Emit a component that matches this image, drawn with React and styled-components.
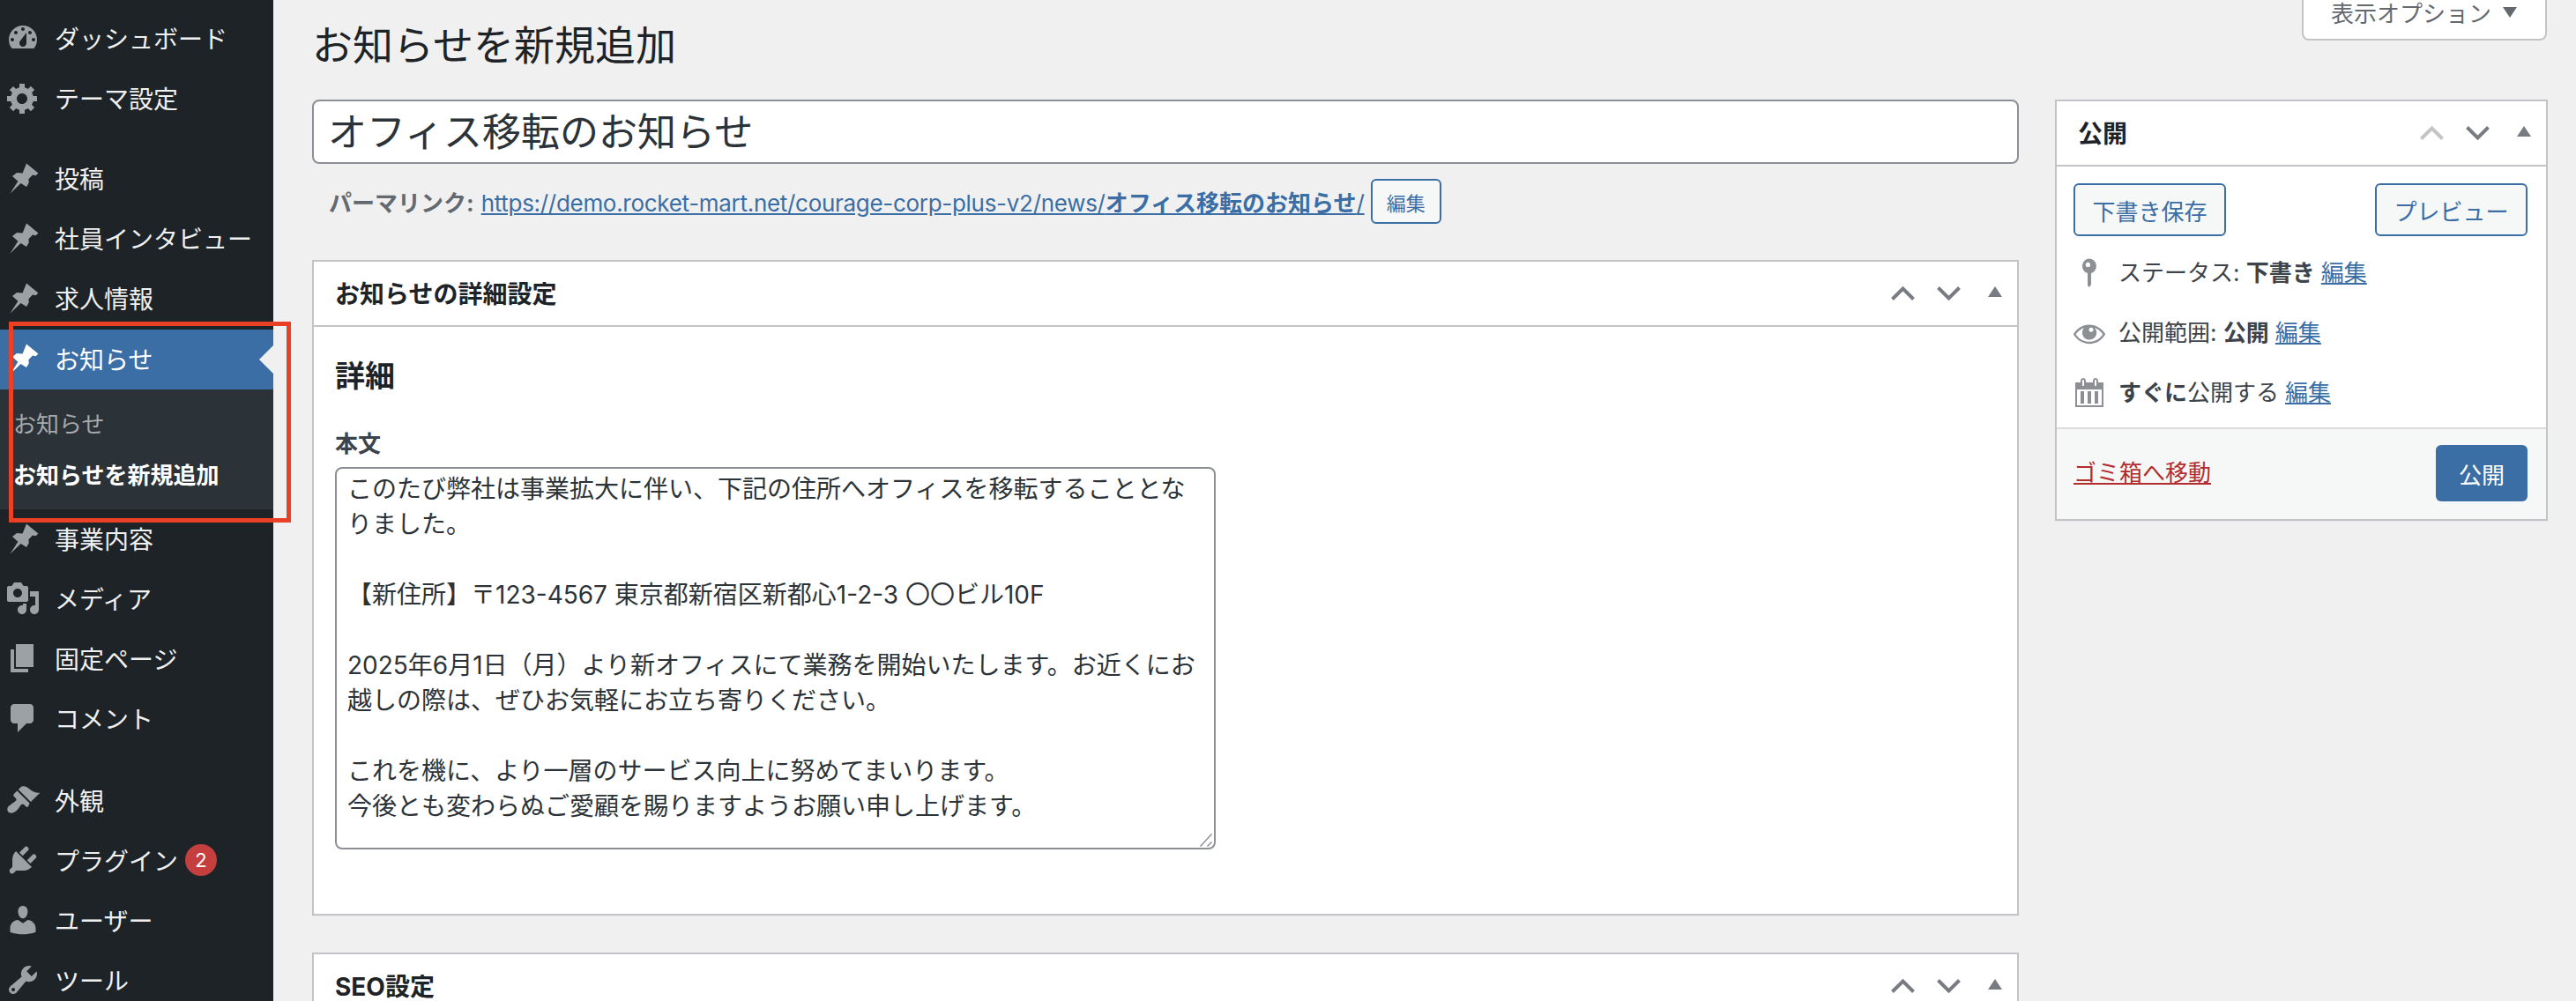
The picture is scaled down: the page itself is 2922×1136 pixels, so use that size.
// App.jsx
import React from 'react'
import styled, { createGlobalStyle } from 'styled-components'

const GlobalStyle = createGlobalStyle`
  html, body {
    margin: 0;
    height: 1136px;
    overflow: hidden;
    background: #f0f0f1;
  }
  body, input, textarea, button {
    font-family: Inter, "Noto Sans CJK JP", sans-serif;
  }
  * {
    box-sizing: border-box;
  }
`

const BLUE = '#3a6ea5'

const Shell = styled.div`
  position: relative;
  display: flex;
  width: 2922px;
  height: 1136px;
  overflow: hidden;
`

const Sidebar = styled.nav`
  flex: 0 0 310px;
  height: 100%;
  padding-top: 10px;
  background: #1d2327;
`

const MenuItem = styled.div`
  display: flex;
  align-items: center;
  height: 68px;
  padding: 0 0 2px 6px;
  margin-top: ${(p) => p.$gap || (p.$active ? 1 : 0)}px;
  background: ${(p) => (p.$active ? BLUE : 'transparent')};
  color: ${(p) => (p.$active ? '#fff' : '#f0f0f1')};
  font-size: 28px;
  position: relative;

  svg {
    flex: 0 0 40px;
    margin-right: 16px;
    fill: ${(p) => (p.$active ? '#fff' : '#9ca1a6')};
  }
`

const ActiveArrow = styled.span`
  position: absolute;
  right: 0;
  top: 18px;
  width: 0;
  height: 0;
  border: 16px solid transparent;
  border-left: none;
  border-right-color: #f0f0f1;
`

const Badge = styled.span`
  display: inline-flex;
  align-items: center;
  justify-content: center;
  width: 36px;
  height: 36px;
  margin-left: 8px;
  border-radius: 50%;
  background: #c53f3f;
  color: #fff;
  font-size: 22px;
`

const Submenu = styled.div`
  height: 136px;
  padding: 11px 0 0 15px;
  background: #2c3338;
`

const SubItem = styled.div`
  height: 58px;
  line-height: 58px;
  font-size: 26px;
  color: ${(p) => (p.$current ? '#fff' : '#a7aaad')};
  font-weight: ${(p) => (p.$current ? 700 : 400)};
`

const Highlight = styled.div`
  position: absolute;
  left: 10px;
  top: 365px;
  width: 320px;
  height: 228px;
  border: 5px solid #ea4025;
  pointer-events: none;
`

const Main = styled.main`
  flex: 1;
  min-width: 0;
  padding: 0 32px 0 44px;
`

const TopRow = styled.header`
  display: flex;
  justify-content: space-between;
  align-items: flex-start;
  height: 113px;
`

const PageTitle = styled.h1`
  margin: 18px 0 0;
  font-size: 46px;
  line-height: 66px;
  font-weight: 400;
  color: #1d2327;
`

const ScreenOptions = styled.div`
  display: flex;
  align-items: center;
  width: 278px;
  height: 50px;
  margin: -4px 1px 0 0;
  padding: 0 0 13px 31px;
  background: #fff;
  border: 2px solid #c3c4c7;
  border-top: none;
  border-radius: 0 0 8px 8px;
  color: #646970;
  font-size: 26px;

  svg {
    margin-left: 13px;
    fill: #646970;
  }
`

const Columns = styled.div`
  display: flex;
  align-items: flex-start;
  gap: 41px;
`

const Editor = styled.div`
  flex: 0 0 1936px;
`

const TitleInput = styled.input`
  display: block;
  width: 100%;
  height: 73px;
  padding: 0 16px 6px;
  border: 2px solid #8c8f94;
  border-radius: 8px;
  background: #fff;
  color: #2c3338;
  font-size: 44px;
  outline: none;
`

const PermalinkRow = styled.div`
  display: flex;
  align-items: center;
  height: 51px;
  margin: 17px 0 41px;
  padding-left: 19px;
  color: #646970;
  font-size: 26px;
`

const PermalinkLabel = styled.strong`
  margin-right: 8px;
  font-weight: 700;
`

const Link = styled.a`
  color: ${(p) => p.$color || BLUE};
  text-decoration: underline;
`

const PermalinkUrl = styled(Link)`
  letter-spacing: -0.3px;

  strong {
    letter-spacing: 0;
  }
`

const SmallButton = styled.button`
  width: 80px;
  height: 51px;
  margin-left: 7px;
  padding: 0;
  border: 2px solid ${BLUE};
  border-radius: 6px;
  background: #f6f7f7;
  color: ${BLUE};
  font-size: 22px;
`

const Postbox = styled.section`
  margin-bottom: 42px;
  background: #fff;
  border: 2px solid #c3c4c7;
  box-shadow: 0 1px 1px rgba(0, 0, 0, 0.04);
`

const PostboxHeader = styled.div`
  display: flex;
  align-items: center;
  justify-content: space-between;
  height: 74px;
  padding: 0 17px 2px 24px;
  border-bottom: 2px solid #c3c4c7;
`

const PostboxTitle = styled.h2`
  margin: 0;
  font-size: 28px;
  font-weight: 700;
  color: #1d2327;
`

const Handles = styled.div`
  display: flex;
  align-items: center;
  gap: 25px;
  margin-top: 2px;

  svg {
    display: block;
  }
`

const Triangle = styled.svg`
  margin: 0 0 4px 6px;
`

const DetailBody = styled.div`
  padding: 33px 0 73px 24px;
`

const DetailHeading = styled.h3`
  margin: 0 0 35px;
  font-size: 34px;
  line-height: 46px;
  font-weight: 700;
  color: #1d2327;
`

const FieldLabel = styled.label`
  display: block;
  margin-bottom: 7px;
  font-size: 26px;
  line-height: 38px;
  font-weight: 700;
  color: #3c434a;
`

const BodyWrap = styled.div`
  position: relative;
  width: 999px;
  height: 434px;
`

const BodyArea = styled.textarea`
  display: block;
  width: 100%;
  height: 100%;
  padding: 3px 12px 4px;
  border: 2px solid #8c8f94;
  border-radius: 8px;
  background: #fff;
  color: #2c3338;
  font-size: 28px;
  line-height: 40px;
  outline: none;
  resize: none;
`

const ResizeGrip = styled.svg`
  position: absolute;
  right: 4px;
  bottom: 3px;
`

const Aside = styled.aside`
  flex: 0 0 559px;
`

const PublishBody = styled.div`
  padding: 19px 21px 5px 19px;
`

const PublishActions = styled.div`
  display: flex;
  justify-content: space-between;
  margin-bottom: 8px;
`

const OutlineButton = styled.button`
  width: 173px;
  height: 60px;
  padding: 0;
  border: 2px solid ${BLUE};
  border-radius: 6px;
  background: #f6f7f7;
  color: ${BLUE};
  font-size: 26px;
`

const StatusRow = styled.div`
  display: flex;
  align-items: center;
  height: 68px;
  margin-left: -2px;
  color: #3c434a;
  font-size: 26px;

  svg {
    flex: 0 0 40px;
    margin-right: 13px;
    fill: #8c8f94;
  }

  strong {
    font-weight: 700;
  }
`

const StatusText = styled.span`
  margin-bottom: 5px;
`

const EditLink = styled(Link)`
  margin-left: 7px;
`

const PublishFooter = styled.div`
  display: flex;
  align-items: center;
  justify-content: space-between;
  height: 104px;
  padding: 0 21px 4px 19px;
  background: #f6f7f7;
  border-top: 2px solid #dcdcde;
  font-size: 26px;
`

const TrashLink = styled(Link)`
  margin-bottom: 3px;
`

const PublishButton = styled.button`
  width: 104px;
  height: 64px;
  margin-top: 2px;
  padding: 0;
  border: none;
  border-radius: 6px;
  background: ${BLUE};
  color: #fff;
  font-size: 26px;
`

const Icon = ({ d, evenodd }) => (
  <svg width='40' height='40' viewBox='0 0 20 20'>
    <path d={d} fillRule={evenodd ? 'evenodd' : undefined} />
  </svg>
)

const ICONS = {
  dashboard:
    'M3.76 16h12.48c1.1-1.37 1.76-3.11 1.76-5 0-4.42-3.58-8-8-8s-8 3.58-8 8c0 1.89.66 3.63 1.76 5zM10 4c.55 0 1 .45 1 1s-.45 1-1 1-1-.45-1-1 .45-1 1-1zM6 6c.55 0 1 .45 1 1s-.45 1-1 1-1-.45-1-1 .45-1 1-1zm8 0c.55 0 1 .45 1 1s-.45 1-1 1-1-.45-1-1 .45-1 1-1zm-5.37 5.55L12 7v6c0 1.1-.9 2-2 2s-2-.9-2-2c0-.57.24-1.08.63-1.45zM4 10c.55 0 1 .45 1 1s-.45 1-1 1-1-.45-1-1 .45-1 1-1zm12 0c.55 0 1 .45 1 1s-.45 1-1 1-1-.45-1-1 .45-1 1-1z',
  gear:
    'M18 12h-2.18c-.17.7-.44 1.35-.81 1.93l1.54 1.54-2.1 2.1-1.54-1.54c-.58.36-1.23.63-1.91.79V19H8v-2.18c-.68-.16-1.33-.43-1.91-.79l-1.54 1.54-2.12-2.12 1.54-1.54c-.36-.58-.63-1.23-.79-1.91H1V9.03h2.17c.16-.7.44-1.35.8-1.94L2.43 5.55l2.1-2.1 1.54 1.54c.58-.37 1.24-.64 1.93-.81V2h3v2.18c.68.16 1.33.43 1.91.79l1.54-1.54 2.12 2.12-1.54 1.54c.36.59.64 1.24.8 1.94H18V12zm-8.5 1.5c1.66 0 3-1.34 3-3s-1.34-3-3-3-3 1.34-3 3 1.34 3 3 3z',
  pin:
    'M12 1.7L18.7 7.2 17.3 8.6 15.5 8.3 13.2 10.6 13.4 12.6 12 15 8.8 13 2.7 18.9 7.2 11.9 4 9 6.5 7 9.8 7.2 11 4.3z',
  media:
    'M13 11V4c0-.55-.45-1-1-1h-1.67L9 1H5L3.67 3H2c-.55 0-1 .45-1 1v7c0 .55.45 1 1 1h10c.55 0 1-.45 1-1zM7 4.5c1.38 0 2.5 1.12 2.5 2.5S8.38 9.5 7 9.5 4.5 8.38 4.5 7 5.62 4.5 7 4.5zM14 6h5v10.5c0 1.38-1.12 2.5-2.5 2.5S14 17.88 14 16.5s1.12-2.5 2.5-2.5c.17 0 .34.02.5.05V9h-3V6zm-4 8.05V13h2v3.5c0 1.38-1.12 2.5-2.5 2.5S7 17.88 7 16.5 8.12 14 9.5 14c.17 0 .34.02.5.05z',
  pages: 'M6 15V2h10v13H6zm-1 1h8v2H3V5h2v11z',
  comment:
    'M5 2h9c1.1 0 2 .9 2 2v7c0 1.1-.9 2-2 2h-2l-5 5v-5H5c-1.1 0-2-.9-2-2V4c0-1.1.9-2 2-2z',
  brush:
    'M14.48 11.06L7.41 3.99l1.5-1.5c.5-.56 2.3-.47 3.51.32 1.21.8 1.43 1.28 2.91 2.1 1.18.64 2.45 1.26 4.45.85zm-.71.71L6.7 4.7 4.93 6.47c-.39.39-.39 1.02 0 1.41l1.06 1.06c.39.39.39 1.03 0 1.42-.6.6-1.43 1.11-2.21 1.69-.35.26-.7.53-1.01.84C1.43 13.23.5 15.5 1.76 16.76c1.26 1.26 3.53.33 4.87-1.01.3-.31.58-.66.84-1 .57-.79 1.08-1.62 1.69-2.22.39-.39 1.02-.39 1.41 0l1.06 1.06c.39.39 1.02.39 1.41 0z',
  plugin:
    'M13.11 4.36L9.87 7.6 8 5.73l3.24-3.24c.35-.34 1.05-.2 1.56.32.52.51.66 1.21.31 1.55zm-8 1.77l.91-1.12 9.01 9.01-1.19.84c-.71.71-2.63 1.16-3.82 1.16H6.14L4.9 17.26c-.59.59-1.54.59-2.12 0-.59-.58-.59-1.53 0-2.12l1.24-1.24v-3.88c0-1.13.4-3.19 1.09-3.89zm7.26 3.97l3.24-3.24c.34-.35 1.04-.21 1.55.31.52.51.66 1.21.31 1.55l-3.24 3.25z',
  user:
    'M10 9.25c-2.27 0-2.73-3.44-2.73-3.44C7 4.02 7.82 2 9.97 2c2.16 0 2.98 2.02 2.71 3.81 0 0-.41 3.44-2.68 3.44zm0 2.57L12.72 10c2.39 0 4.52 2.33 4.52 4.53v2.49s-3.65 1.13-7.24 1.13c-3.65 0-7.24-1.13-7.24-1.13v-2.49c0-2.25 1.94-4.48 4.47-4.48z',
  wrench:
    'M16.68 9.77c-1.34 1.34-3.3 1.67-4.95.99l-5.41 6.52c-.99.99-2.59.99-3.58 0s-.99-2.59 0-3.57l6.52-5.42c-.68-1.65-.35-3.61.99-4.95 1.28-1.28 3.12-1.62 4.72-1.06l-2.89 2.89 2.82 2.82 2.86-2.87c.53 1.58.18 3.39-1.08 4.67zM3.81 16.21c.4.39 1.04.39 1.43 0 .4-.4.4-1.04 0-1.43-.39-.4-1.03-.4-1.43 0-.39.39-.39 1.03 0 1.43z',
  key:
    'M9.75 1.75a4.25 4.25 0 0 1 1.25 8.3V16.5L9.9 18 9 17V10.05a4.25 4.25 0 0 1 .75-8.3zM9.2 3.9a1.3 1.3 0 1 0 0 2.6 1.3 1.3 0 0 0 0-2.6z',
  eye:
    'M18.3 9.5C15 4.9 8.5 3.8 3.9 7.2c-1.2.9-2.2 2.1-3 3.4.2.4.5.8.8 1.2 3.3 4.6 9.6 5.6 14.2 2.4.9-.7 1.7-1.4 2.4-2.4.3-.4.5-.8.8-1.2-.3-.4-.5-.8-.8-1.1zm-8.2-2.3c.5-.5 1.3-.5 1.8 0s.5 1.3 0 1.8-1.3.5-1.8 0-.5-1.3 0-1.8zm-.1 7.7c-3.1 0-6-1.6-7.7-4.2C3.5 9 5.1 7.8 7 7c-.7.8-1 1.7-1 2.7 0 2.2 1.7 4.1 4 4.1 2.2 0 4.1-1.7 4.1-4v-.1c0-1-.4-2-1.1-2.7 1.9.8 3.5 2 4.6 3.7-1.7 2.6-4.6 4.2-7.6 4.2z',
  calendar:
    'M15 4h3v14H2V4h3V3c0-.83.67-1.5 1.5-1.5S8 2.17 8 3v1h4V3c0-.83.67-1.5 1.5-1.5S15 2.17 15 3v1zM6 3v2.5c0 .28.22.5.5.5s.5-.22.5-.5V3c0-.28-.22-.5-.5-.5S6 2.72 6 3zm7 0v2.5c0 .28.22.5.5.5s.5-.22.5-.5V3c0-.28-.22-.5-.5-.5s-.5.22-.5.5zm4 14V8H3v9h14zM7 16V9H5v7h2zm4 0V9H9v7h2zm4 0V9h-2v7h2z',
}

const Chevron = ({ up, color }) => (
  <svg width='27' height='18' viewBox='0 0 27 18'>
    <polyline
      points={up ? '1.5,15.5 13.5,3.5 25.5,15.5' : '1.5,2.5 13.5,14.5 25.5,2.5'}
      fill='none'
      stroke={color}
      strokeWidth='4'
    />
  </svg>
)

const HandleButtons = ({ upColor = '#787c82' }) => (
  <Handles>
    <Chevron up color={upColor} />
    <Chevron color='#787c82' />
    <Triangle width='16' height='12' viewBox='0 0 16 12'>
      <polygon points='8,0 16,12 0,12' fill='#787c82' />
    </Triangle>
  </Handles>
)

const BODY_TEXT = `このたび弊社は事業拡大に伴い、下記の住所へオフィスを移転することとなりました。

【新住所】〒123-4567 東京都新宿区新都心1-2-3 〇〇ビル10F

2025年6月1日（月）より新オフィスにて業務を開始いたします。お近くにお越しの際は、ぜひお気軽にお立ち寄りください。

これを機に、より一層のサービス向上に努めてまいります。
今後とも変わらぬご愛顧を賜りますようお願い申し上げます。`

const App = () => {
  return (
    <Shell>
      <GlobalStyle />
      <Sidebar>
        <MenuItem><Icon d={ICONS.dashboard} evenodd />ダッシュボード</MenuItem>
        <MenuItem><Icon d={ICONS.gear} />テーマ設定</MenuItem>
        <MenuItem $gap={23}><Icon d={ICONS.pin} />投稿</MenuItem>
        <MenuItem><Icon d={ICONS.pin} />社員インタビュー</MenuItem>
        <MenuItem><Icon d={ICONS.pin} />求人情報</MenuItem>
        <MenuItem $active>
          <Icon d={ICONS.pin} />お知らせ
          <ActiveArrow />
        </MenuItem>
        <Submenu>
          <SubItem>お知らせ</SubItem>
          <SubItem $current>お知らせを新規追加</SubItem>
        </Submenu>
        <MenuItem><Icon d={ICONS.pin} />事業内容</MenuItem>
        <MenuItem><Icon d={ICONS.media} evenodd />メディア</MenuItem>
        <MenuItem><Icon d={ICONS.pages} />固定ページ</MenuItem>
        <MenuItem><Icon d={ICONS.comment} />コメント</MenuItem>
        <MenuItem $gap={25}><Icon d={ICONS.brush} />外観</MenuItem>
        <MenuItem>
          <Icon d={ICONS.plugin} />プラグイン
          <Badge>2</Badge>
        </MenuItem>
        <MenuItem><Icon d={ICONS.user} />ユーザー</MenuItem>
        <MenuItem><Icon d={ICONS.wrench} />ツール</MenuItem>
      </Sidebar>

      <Main>
        <TopRow>
          <PageTitle>お知らせを新規追加</PageTitle>
          <ScreenOptions>
            表示オプション
            <svg width='16' height='12' viewBox='0 0 16 12'>
              <polygon points='0,0 16,0 8,12' />
            </svg>
          </ScreenOptions>
        </TopRow>

        <Columns>
          <Editor>
            <TitleInput readOnly value='オフィス移転のお知らせ' />
            <PermalinkRow>
              <PermalinkLabel>パーマリンク:</PermalinkLabel>
              <PermalinkUrl>
                https://demo.rocket-mart.net/courage-corp-plus-v2/news/
                <strong>オフィス移転のお知らせ</strong>/
              </PermalinkUrl>
              <SmallButton>編集</SmallButton>
            </PermalinkRow>

            <Postbox>
              <PostboxHeader>
                <PostboxTitle>お知らせの詳細設定</PostboxTitle>
                <HandleButtons />
              </PostboxHeader>
              <DetailBody>
                <DetailHeading>詳細</DetailHeading>
                <FieldLabel>本文</FieldLabel>
                <BodyWrap>
                  <BodyArea readOnly value={BODY_TEXT} />
                  <ResizeGrip width='14' height='15' viewBox='0 0 14 15'>
                    <path d='M0.5 14.5L13.5 0.5M8.5 14.5L13.5 9.5' stroke='#8c8f94' strokeWidth='1.5' fill='none' />
                  </ResizeGrip>
                </BodyWrap>
              </DetailBody>
            </Postbox>

            <Postbox>
              <PostboxHeader>
                <PostboxTitle>SEO設定</PostboxTitle>
                <HandleButtons />
              </PostboxHeader>
            </Postbox>
          </Editor>

          <Aside>
            <Postbox>
              <PostboxHeader>
                <PostboxTitle>公開</PostboxTitle>
                <HandleButtons upColor='#c3c4c7' />
              </PostboxHeader>
              <PublishBody>
                <PublishActions>
                  <OutlineButton>下書き保存</OutlineButton>
                  <OutlineButton>プレビュー</OutlineButton>
                </PublishActions>
                <StatusRow>
                  <Icon d={ICONS.key} evenodd />
                  <StatusText>
                    ステータス: <strong>下書き</strong>
                    <EditLink>編集</EditLink>
                  </StatusText>
                </StatusRow>
                <StatusRow>
                  <Icon d={ICONS.eye} evenodd />
                  <StatusText>
                    公開範囲: <strong>公開</strong>
                    <EditLink>編集</EditLink>
                  </StatusText>
                </StatusRow>
                <StatusRow>
                  <Icon d={ICONS.calendar} evenodd />
                  <StatusText>
                    <strong>すぐに</strong>公開する
                    <EditLink>編集</EditLink>
                  </StatusText>
                </StatusRow>
              </PublishBody>
              <PublishFooter>
                <TrashLink $color='#b32d2e'>ゴミ箱へ移動</TrashLink>
                <PublishButton>公開</PublishButton>
              </PublishFooter>
            </Postbox>
          </Aside>
        </Columns>
      </Main>

      <Highlight />
    </Shell>
  )
}

export default App
